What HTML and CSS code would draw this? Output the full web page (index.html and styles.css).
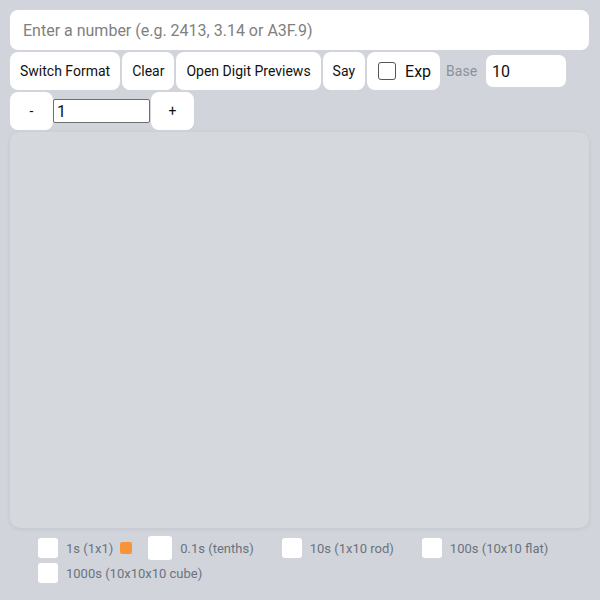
FILE: index.html
```html
<!DOCTYPE html>
<html>
<head>
<meta charset="utf-8">
<link rel="stylesheet" href="styles.css">
</head>
<body>
<div class="app">
  <input class="number" type="text" placeholder="Enter a number (e.g. 2413, 3.14 or A3F.9)">
  <div class="toolbar">
    <button class="btn">Switch Format</button>
    <button class="btn">Clear</button>
    <button class="btn">Open Digit Previews</button>
    <button class="btn">Say</button>
    <label class="btn exp"><span class="box"></span><span class="exp-text">Exp</span></label>
    <span class="base-label">Base</span>
    <input class="base" type="text" value="10">
  </div>
  <div class="stepper">
    <button class="btn step">-</button>
    <input class="step-input" type="text" value="1">
    <button class="btn step">+</button>
  </div>
  <div class="canvas"></div>
  <div class="legend">
    <div class="item"><span class="cb"></span><span class="lbl">1s (1x1)</span><span class="swatch"></span></div>
    <div class="item tenths"><span class="cb big"></span><span class="lbl">0.1s (tenths)</span></div>
    <div class="item"><span class="cb"></span><span class="lbl">10s (1x10 rod)</span></div>
    <div class="item"><span class="cb"></span><span class="lbl">100s (10x10 flat)</span></div>
    <div class="item"><span class="cb"></span><span class="lbl">1000s (10x10x10 cube)</span></div>
  </div>
</div>
</body>
</html>
```
FILE: styles.css
```css
* { box-sizing: border-box; }
html, body { margin: 0; padding: 0; }
body {
  background: #d1d5db;
  font-family: Roboto, "Liberation Sans", sans-serif;
  color: #111;
  width: 600px;
  height: 600px;
  overflow: hidden;
}
.app { padding: 10px 11px 0 10px; }
.number {
  display: block;
  width: 100%;
  height: 40px;
  border: none;
  border-radius: 8px;
  background: #fff;
  padding: 0 13px;
  font-family: Roboto, sans-serif;
  font-size: 16px;
  color: #111;
  outline: none;
}
.number::placeholder { color: #808080; }
.toolbar {
  display: flex;
  align-items: center;
  gap: 2px;
  margin-top: 2px;
}
.btn {
  height: 38px;
  border: none;
  border-radius: 8px;
  background: #fff;
  padding: 0 10px;
  font-family: Roboto, sans-serif;
  font-size: 14px;
  color: #111;
  display: inline-flex;
  align-items: center;
  justify-content: center;
}
.exp { padding: 0 9px 0 11px; gap: 9px; }
.box {
  width: 18px; height: 18px;
  border: 1.5px solid #555;
  border-radius: 3px;
  background: #fff;
}
.exp-text { font-size: 16px; }
.base-label {
  margin-left: 4px;
  font-size: 14px;
  color: #8b9099;
}
.base {
  margin-left: 7px;
  width: 80px;
  height: 32px;
  border: none;
  border-radius: 7px;
  background: #fff;
  padding: 0 6px;
  font-family: Roboto, sans-serif;
  font-size: 16px;
  color: #111;
  outline: none;
}
.stepper {
  display: flex;
  align-items: center;
  margin-top: 2px;
}
.step { width: 43px; padding: 0; }
.step-input {
  width: 97px;
  height: 24px;
  border: 1px solid #6f6f6f;
  border-radius: 2px;
  background: #fff;
  padding: 0 3px;
  font-family: Roboto, sans-serif;
  font-size: 16px;
  color: #111;
  margin-right: 1px;
}
.canvas {
  margin-top: 2px;
  height: 396px;
  background: #d5d8dd;
  border-radius: 10px;
  box-shadow: 0 1px 4px rgba(0,0,0,0.08);
}
.legend {
  display: flex;
  flex-wrap: wrap;
  column-gap: 28px;
  row-gap: 2px;
  padding: 8px 28px 0 28px;
}
.item {
  display: flex;
  align-items: center;
  height: 24px;
  font-size: 13px;
  color: #6b7280;
}
.item:last-child { height: 22px; }
.cb {
  width: 20px; height: 20px;
  background: #fff;
  border-radius: 3px;
  margin-right: 8px;
}
.cb.big { width: 24px; height: 24px; margin-right: 8px; }
.swatch {
  width: 12px; height: 12px;
  background: #f7943a;
  border-radius: 2px;
  margin-left: 7px;
  margin-right: -12px;
}
```
